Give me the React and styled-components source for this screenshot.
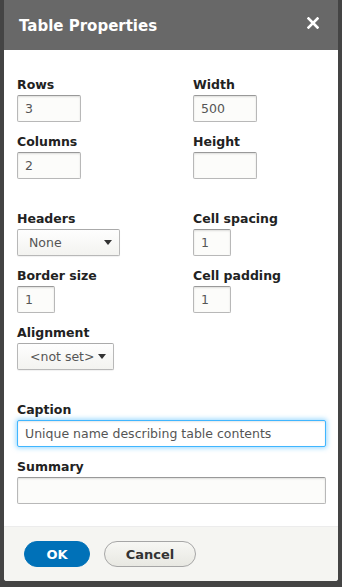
import { createGlobalStyle, styled } from "styled-components";

const Global = createGlobalStyle`
  html, body {
    margin: 0;
    padding: 0;
    background: #444;
  }
  body {
    font-family: "DejaVu Sans", "Liberation Sans", sans-serif;
  }
`;

const Dialog = styled.div`
  margin: 0 4px;
  height: 581px;
  background: #fff;
  border-radius: 0 0 3px 3px;
  overflow: hidden;
  display: flex;
  flex-direction: column;
`;

const Header = styled.div`
  height: 50px;
  flex: none;
  background: #686868;
  display: flex;
  align-items: center;
  justify-content: space-between;
  padding: 0 19px 0 15px;
  box-sizing: border-box;
`;

const Title = styled.h1`
  margin: 0;
  font-size: 15px;
  font-weight: bold;
  color: #fff;
  padding-top: 2px;
`;

const Close = styled.button`
  border: 0;
  background: none;
  padding: 0;
  width: 12px;
  height: 12px;
  display: flex;
  margin-top: -4px;
  cursor: pointer;
`;

const Body = styled.div`
  flex: 1;
  padding: 26px 13px 0 13px;
`;

const Section = styled.div`
  display: grid;
  grid-template-columns: ${(p) => (p.$single ? "1fr" : "176px 1fr")};
  row-gap: 11px;
  margin-top: ${(p) => (p.$first ? 0 : "31px")};
`;

const Field = styled.div`
  display: flex;
  flex-direction: column;
  align-items: flex-start;
`;

const Label = styled.label`
  font-size: 12.5px;
  font-weight: bold;
  color: #222;
  line-height: 18px;
  margin-bottom: 1px;
`;

const Input = styled.input`
  box-sizing: border-box;
  width: ${(p) => p.$w || "64px"};
  height: 27px;
  padding: 0 7px;
  font-family: inherit;
  font-size: 12.5px;
  color: #555;
  background: #fcfcfa;
  border: 1px solid #b8b8b8;
  border-top-color: #999;
  border-radius: 2px;
  box-shadow: inset 0 1px 2px rgba(0, 0, 0, 0.125);
  outline: none;

  &.focus {
    border-color: #40b6ff;
    box-shadow: inset 0 1px 2px rgba(0, 0, 0, 0.1), 0 0 5px 1px rgba(64, 182, 255, 0.55);
    background: #fff;
  }
`;

const SelectBox = styled.div`
  box-sizing: border-box;
  width: ${(p) => p.$w};
  height: 27px;
  display: flex;
  align-items: center;
  justify-content: space-between;
  padding: 0 7px 0 ${(p) => p.$pl || "11px"};
  font-size: 12.5px;
  color: #555;
  background: linear-gradient(#fefefe, #f3f3f0);
  border: 1px solid #b8b8b8;
  border-top-color: #aaa;
  border-radius: 2px;
  box-shadow: 0 1px 1px rgba(0, 0, 0, 0.06);
`;

const Arrow = styled.span`
  width: 0;
  height: 0;
  border-left: 4px solid transparent;
  border-right: 4px solid transparent;
  border-top: 5px solid #333;
`;

const Footer = styled.div`
  flex: none;
  height: 55px;
  box-sizing: border-box;
  background: #f5f5f2;
  border-top: 1px solid #ececec;
  display: flex;
  align-items: center;
  gap: 14px;
  padding: 0 20px;
`;

const Button = styled.button`
  box-sizing: border-box;
  height: 26px;
  width: ${(p) => p.$w};
  border-radius: 20px;
  font-family: inherit;
  font-size: 13px;
  font-weight: bold;
  cursor: pointer;
  padding: 0;
  color: ${(p) => (p.$primary ? "#fff" : "#333")};
  background: ${(p) =>
    p.$primary ? "#0071b8" : "linear-gradient(#f7f7f4, #e8e8e2)"};
  border: 1px solid ${(p) => (p.$primary ? "#0071b8" : "#a6a6a6")};
`;

export default function App() {
  return (
    <>
      <Global />
      <Dialog>
        <Header>
          <Title>Table Properties</Title>
          <Close aria-label="Close">
            <svg width="12" height="12" viewBox="0 0 12 12">
              <path d="M1.5 1.5 L10.5 10.5 M10.5 1.5 L1.5 10.5" stroke="#fff" strokeWidth="2.6" strokeLinecap="square" />
            </svg>
          </Close>
        </Header>
        <Body>
          <Section $first>
            <Field>
              <Label>Rows</Label>
              <Input defaultValue="3" />
            </Field>
            <Field>
              <Label>Width</Label>
              <Input defaultValue="500" />
            </Field>
            <Field>
              <Label>Columns</Label>
              <Input defaultValue="2" />
            </Field>
            <Field>
              <Label>Height</Label>
              <Input defaultValue="" />
            </Field>
          </Section>
          <Section>
            <Field>
              <Label>Headers</Label>
              <SelectBox $w="103px">
                <span>None</span>
                <Arrow />
              </SelectBox>
            </Field>
            <Field>
              <Label>Cell spacing</Label>
              <Input $w="38px" defaultValue="1" />
            </Field>
            <Field>
              <Label>Border size</Label>
              <Input $w="38px" defaultValue="1" />
            </Field>
            <Field>
              <Label>Cell padding</Label>
              <Input $w="38px" defaultValue="1" />
            </Field>
            <Field>
              <Label>Alignment</Label>
              <SelectBox $w="97px" $pl="12px">
                <span>&lt;not set&gt;</span>
                <Arrow />
              </SelectBox>
            </Field>
          </Section>
          <Section $single>
            <Field>
              <Label>Caption</Label>
              <Input className="focus" $w="309px" defaultValue="Unique name describing table contents" />
            </Field>
            <Field>
              <Label>Summary</Label>
              <Input $w="309px" defaultValue="" />
            </Field>
          </Section>
        </Body>
        <Footer>
          <Button $primary $w="66px">OK</Button>
          <Button $w="92px">Cancel</Button>
        </Footer>
      </Dialog>
    </>
  );
}
